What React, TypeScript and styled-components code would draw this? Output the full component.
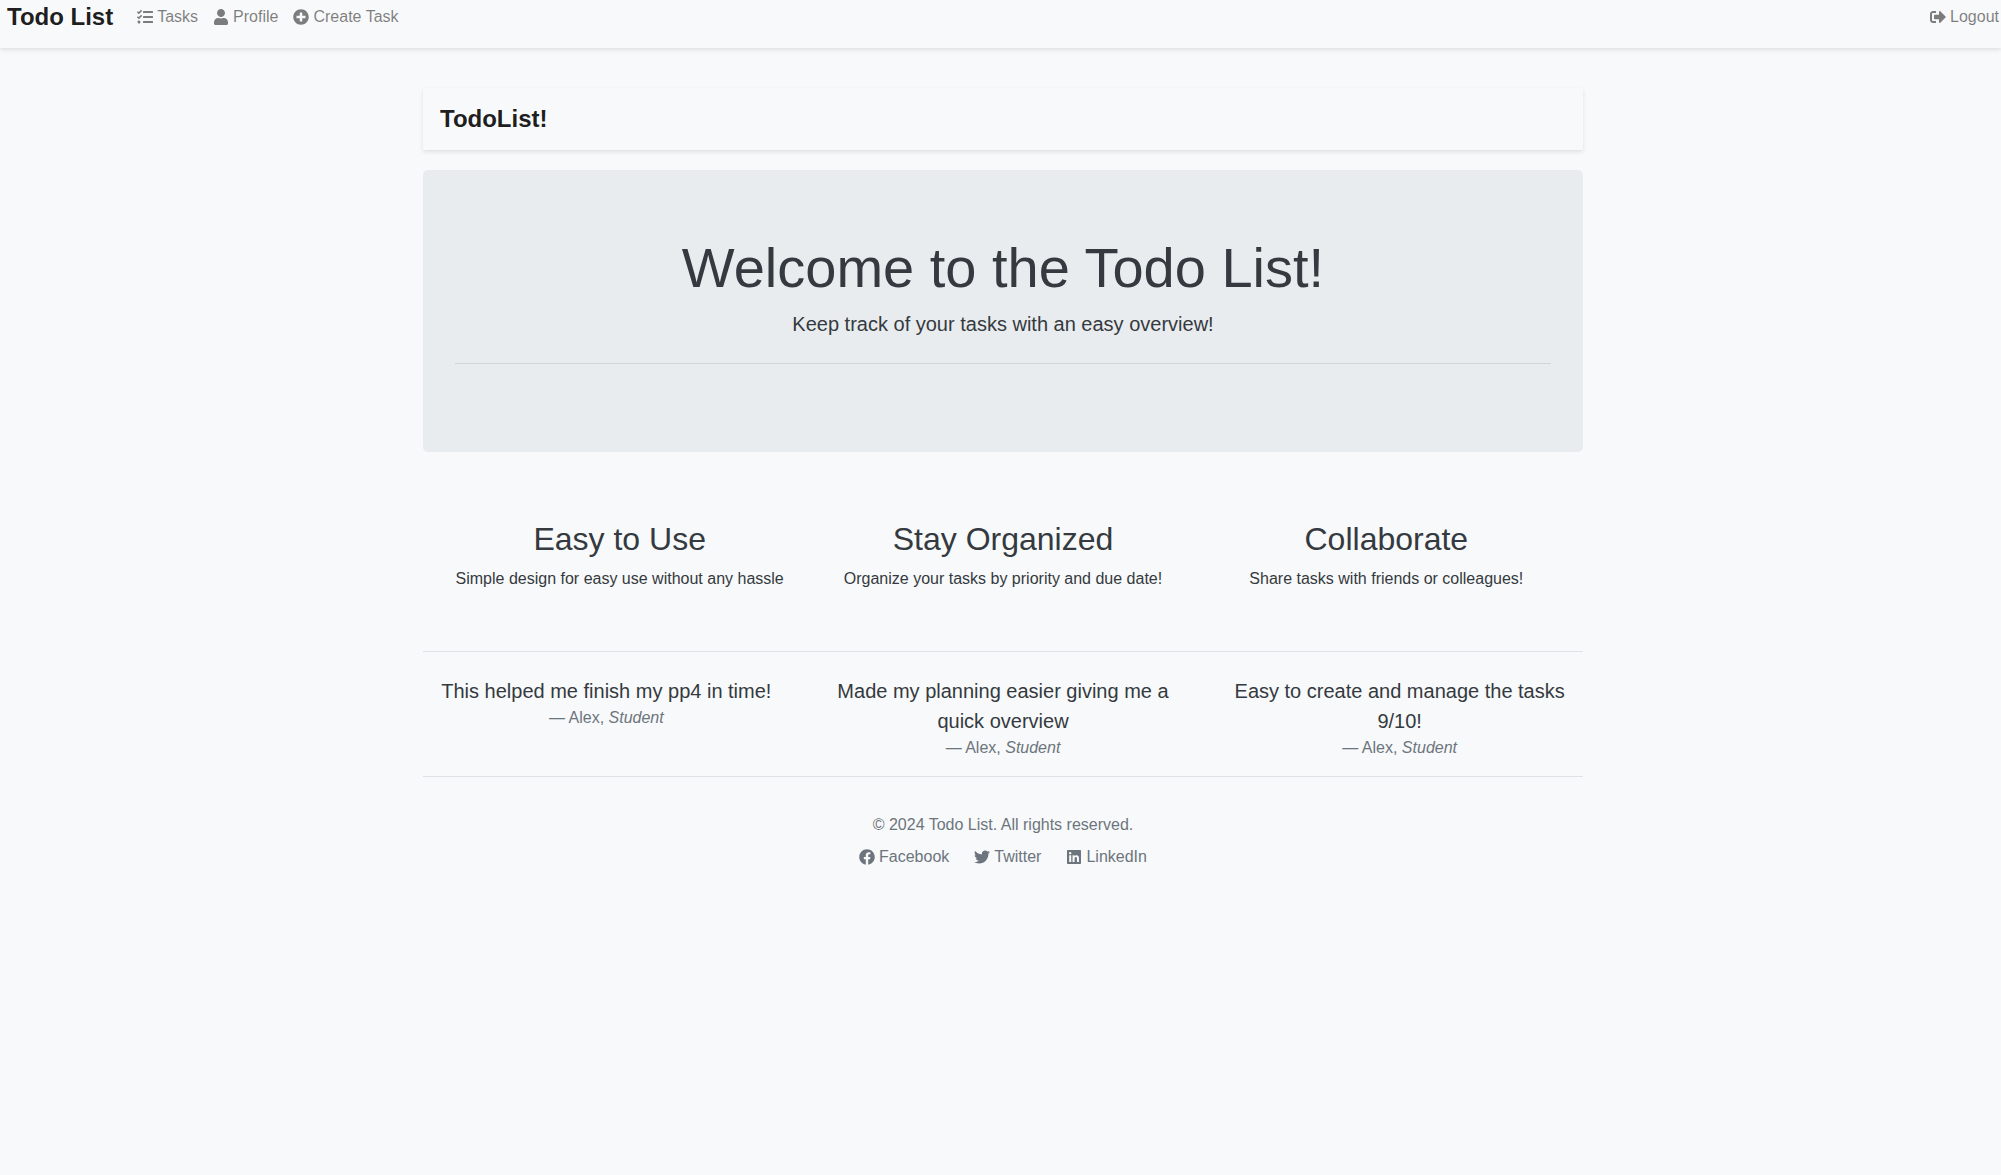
import React from "react";
import styled, { createGlobalStyle } from "styled-components";
import {
  FaFacebook,
  FaLinkedin,
  FaPlusCircle,
  FaSignOutAlt,
  FaTasks,
  FaTwitter,
  FaUser,
} from "react-icons/fa";

const GlobalStyle = createGlobalStyle`
  *, *::before, *::after { box-sizing: border-box; }
  body {
    margin: 0;
    background: #f8f9fa;
    color: #343a40;
    font-family: Arial, "Liberation Sans", sans-serif;
    font-size: 16px;
    line-height: 24px;
  }
  h1, h2, p, ul, blockquote, figure { margin: 0; padding: 0; font-weight: 400; }
  a { text-decoration: none; }
`;

const TopBar = styled.nav`
  display: flex;
  align-items: center;
  padding: 0 2px 14px 7px;
  background: #f8f9fa;
  box-shadow: 0 2px 4px rgba(0, 0, 0, 0.1);
`;

const Brand = styled.a`
  color: rgba(0, 0, 0, 0.9);
  font-size: 24px;
  font-weight: 700;
  line-height: 34px;
`;

const NavList = styled.ul`
  display: flex;
  flex: 1;
  gap: 15px;
  margin-left: 24px;
  list-style: none;
`;

const NavItem = styled.li<{ $end?: boolean }>`
  margin-left: ${(p) => (p.$end ? "auto" : "0")};
`;

const IconLink = styled.a<{ $color: string }>`
  display: flex;
  align-items: center;
  gap: 4px;
  color: ${(p) => p.$color};

  svg {
    width: auto;
    height: 16px;
  }
`;

const Page = styled.div`
  max-width: 1205px;
  margin: 0 auto;
  padding: 40px 20px 40px 25px;
`;

const Header = styled.header`
  display: flex;
  padding: 13px 17px;
  background: #f8f9fa;
  box-shadow: 0 2px 4px rgba(0, 0, 0, 0.1);
`;

const HeaderTitle = styled(Brand)`
  line-height: 36px;
`;

const Hero = styled.section`
  margin-top: 20px;
  padding: 64px 32px;
  border-radius: 5px;
  background: #e9ecef;
  text-align: center;
`;

const HeroTitle = styled.h1`
  margin-bottom: 8px;
  font-size: 56px;
  line-height: 67px;
`;

const Lead = styled.p`
  font-size: 20px;
  line-height: 30px;
`;

const Rule = styled.hr`
  margin: 24px 0;
  border: 0;
  border-top: 1px solid rgba(0, 0, 0, 0.1);
`;

const Features = styled.section`
  display: grid;
  grid-template-columns: repeat(3, 1fr);
  padding: 67px 5px 60px;
  text-align: center;
`;

const FeatureTitle = styled.h2`
  margin-bottom: 8px;
  font-size: 32px;
  line-height: 40px;
`;

const Testimonials = styled.section`
  display: grid;
  grid-template-columns: repeat(3, 1fr);
  gap: 30px;
  padding: 24px 0 16px;
  border-top: 1px solid #dee2e6;
  border-bottom: 1px solid #dee2e6;
  text-align: center;
`;

const Author = styled.figcaption`
  color: #6c757d;
`;

const Footer = styled.footer`
  padding-top: 36px;
  color: #6c757d;
  text-align: center;
`;

const SocialList = styled.ul`
  display: flex;
  justify-content: center;
  gap: 25px;
  margin-top: 8px;
  list-style: none;
`;

const NAV_COLOR = "rgba(0, 0, 0, 0.5)";
const MUTED = "#6c757d";

const navItems = [
  { label: "Tasks", Icon: FaTasks },
  { label: "Profile", Icon: FaUser },
  { label: "Create Task", Icon: FaPlusCircle },
  { label: "Logout", Icon: FaSignOutAlt, end: true },
];

const features = [
  { title: "Easy to Use", text: "Simple design for easy use without any hassle" },
  { title: "Stay Organized", text: "Organize your tasks by priority and due date!" },
  { title: "Collaborate", text: "Share tasks with friends or colleagues!" },
];

const quotes = [
  "This helped me finish my pp4 in time!",
  "Made my planning easier giving me a quick overview",
  "Easy to create and manage the tasks 9/10!",
];

const socials = [
  { label: "Facebook", Icon: FaFacebook },
  { label: "Twitter", Icon: FaTwitter },
  { label: "LinkedIn", Icon: FaLinkedin },
];

export default function App() {
  return (
    <>
      <GlobalStyle />
      <TopBar>
        <Brand href="#">Todo List</Brand>
        <NavList>
          {navItems.map(({ label, Icon, end }) => (
            <NavItem key={label} $end={end}>
              <IconLink href="#" $color={NAV_COLOR}>
                <Icon aria-hidden />
                {label}
              </IconLink>
            </NavItem>
          ))}
        </NavList>
      </TopBar>
      <Page>
        <Header>
          <HeaderTitle href="#">TodoList!</HeaderTitle>
        </Header>
        <main>
          <Hero>
            <HeroTitle>Welcome to the Todo List!</HeroTitle>
            <Lead>Keep track of your tasks with an easy overview!</Lead>
            <Rule />
          </Hero>
          <Features>
            {features.map((f) => (
              <div key={f.title}>
                <FeatureTitle>{f.title}</FeatureTitle>
                <p>{f.text}</p>
              </div>
            ))}
          </Features>
          <Testimonials>
            {quotes.map((q) => (
              <figure key={q}>
                <blockquote>
                  <Lead>{q}</Lead>
                </blockquote>
                <Author>
                  — Alex, <cite>Student</cite>
                </Author>
              </figure>
            ))}
          </Testimonials>
        </main>
        <Footer>
          <p>© 2024 Todo List. All rights reserved.</p>
          <SocialList>
            {socials.map(({ label, Icon }) => (
              <li key={label}>
                <IconLink href="#" $color={MUTED}>
                  <Icon aria-hidden />
                  {label}
                </IconLink>
              </li>
            ))}
          </SocialList>
        </Footer>
      </Page>
    </>
  );
}
